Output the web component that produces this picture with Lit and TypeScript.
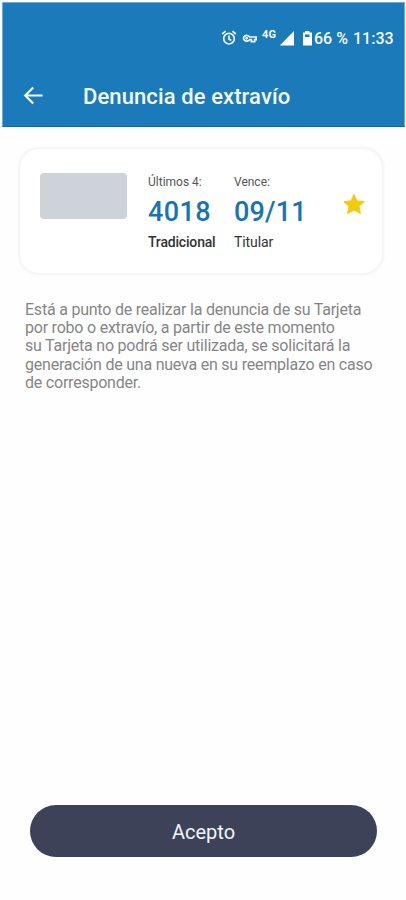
import { LitElement, html, css } from "lit";
import { customElement } from "lit/decorators.js";

@customElement("app-root")
export class AppRoot extends LitElement {
  static styles = css`
    :host {
      display: flex;
      flex-direction: column;
      box-sizing: border-box;
      width: 406px;
      height: 900px;
      padding: 2px 1px 0 2px;
      background: #fefefe;
      font-family: Roboto, sans-serif;
      color: #333;
    }
    header {
      box-sizing: border-box;
      height: 125px;
      background: #1b7ab9;
      color: #f4faff;
      border: 1px solid #6fabd5;
      border-bottom-color: #0c69ad;
    }
    .status {
      display: flex;
      height: 68px;
      padding: 26px 10px 0 218px;
      box-sizing: border-box;
      line-height: 19px;
      font-size: 16px;
      font-weight: 500;
      white-space: nowrap;
    }
    svg { display: block; flex: none; }
    .net { font-size: 11px; line-height: 12px; font-weight: 700; margin-left: 5px; width: 17px; letter-spacing: 0.3px; }
    .pct { margin-left: 1px; width: 39px; }
    .title {
      display: flex;
      align-items: center;
      height: 50px;
    }
    .title svg { margin-left: 19px; }
    h1 { margin: 2px 0 0 39px; font-size: 22px; line-height: 28px; font-weight: 500; letter-spacing: 0.1px; white-space: nowrap; }
    .card {
      box-sizing: border-box;
      display: flex;
      width: 364px;
      height: 126px;
      margin: 21px 0 0 17px;
      padding: 24px 0 0 20px;
      border: 1px solid #f5f5f5;
      border-radius: 20px;
      background: #fff;
      box-shadow: 0 0 3px 1px #f3f3f3;
    }
    .thumb { width: 87px; height: 46px; border-radius: 4px; background: #ced3da; flex: none; }
    .col { display: flex; flex-direction: column; white-space: nowrap; }
    .first { margin-left: 21px; width: 86px; }
    .second { width: 108px; }
    .label { font-size: 12px; line-height: 18px; color: #555; }
    .num { font-size: 27px; line-height: 32px; margin-top: 5px; font-weight: 500; letter-spacing: 0.4px; color: #1873b5; }
    .second .num { letter-spacing: 0.15px; }
    .kind { font-size: 14px; line-height: 18px; margin-top: 5px; letter-spacing: -0.1px; color: #333; }
    .first .kind { font-weight: 500; letter-spacing: -0.18px; }
    .star { margin-top: 20px; }
    .msg { margin: 27px 0 0 23px; font-size: 16px; line-height: 18.2px; letter-spacing: -0.22px; color: #868686; white-space: nowrap; }
    .msg span { display: block; }
    button {
      margin: auto 28px 43px 28px;
      height: 52px;
      border: 0;
      border-radius: 26px;
      background: #3d4259;
      color: #f3f4fa;
      font: 400 20px/50px Roboto, sans-serif;
      padding: 2px 0 0;
      flex: none;
    }
  `;

  render() {
    return html`
      <header>
        <div class="status">
          <svg width="16" height="18" viewBox="0 0 16 18" fill="none" stroke="#eef7ff" stroke-width="1.7">
            <circle cx="8" cy="9.7" r="5.3" />
            <path d="M8 6.5v3.6l2.3 1.4M1.2 5 4.6 2.200M14.8 5 11.4 2.200" />
          </svg>
          <svg width="15" height="18" viewBox="0 0 15 18" fill="none" stroke="#eef7ff" stroke-width="1.7" style="margin-left:5px">
            <path d="M7.6 8A3.2 2.9 0 1 0 7.6 10.6H9.3v2h3.4v-2h1.5V8Z" />
            <circle cx="4.6" cy="9.3" r=".6" />
          </svg>
          <span class="net">4G</span>
          <svg width="16" height="18" viewBox="0 0 16 18"><path d="M15 2V16.500H.8Z" fill="#fff" /></svg>
          <svg width="11" height="18" viewBox="0 0 11 18" style="margin-left:7px">
            <path d="M3 2h4.5v1.5H10V16.500H1V3.500H3Z" fill="#fff" /><path d="M3 5.500h4.500v2.500H3Z" fill="#1b7ab9" />
          </svg>
          <span class="pct">66 %</span>
          <span>11:33</span>
        </div>
        <div class="title">
          <svg width="22" height="22" viewBox="0 0 22 22" fill="none" stroke="#f2f9ff" stroke-width="2.2">
            <path d="M20.500 10.500H4M11.200 2.500 3.200 10.500 11.200 18.500" />
          </svg>
          <h1>Denuncia de extravío</h1>
        </div>
      </header>
      <section class="card">
        <div class="thumb"></div>
        <div class="col first">
          <span class="label">Últimos 4:</span><span class="num">4018</span><span class="kind">Tradicional</span>
        </div>
        <div class="col second">
          <span class="label">Vence:</span><span class="num">09/11</span><span class="kind">Titular</span>
        </div>
        <svg class="star" width="24" height="22" viewBox="0 0 24 22">
          <path d="M12 1.500 15 7.900 22.200 8.700 17 13.300 18.400 20.500 12 17 5.600 20.500 7 13.300 1.800 8.700 9 7.900Z" fill="#f2cc0c" stroke="#f2cc0c" stroke-linejoin="round" />
        </svg>
      </section>
      <div class="msg">
        <span>Está a punto de realizar la denuncia de su Tarjeta</span>
        <span>por robo o extravío, a partir de este momento</span>
        <span>su Tarjeta no podrá ser utilizada, se solicitará la</span>
        <span>generación de una nueva en su reemplazo en caso</span>
        <span>de corresponder.</span>
      </div>
      <button>Acepto</button>
    `;
  }
}
